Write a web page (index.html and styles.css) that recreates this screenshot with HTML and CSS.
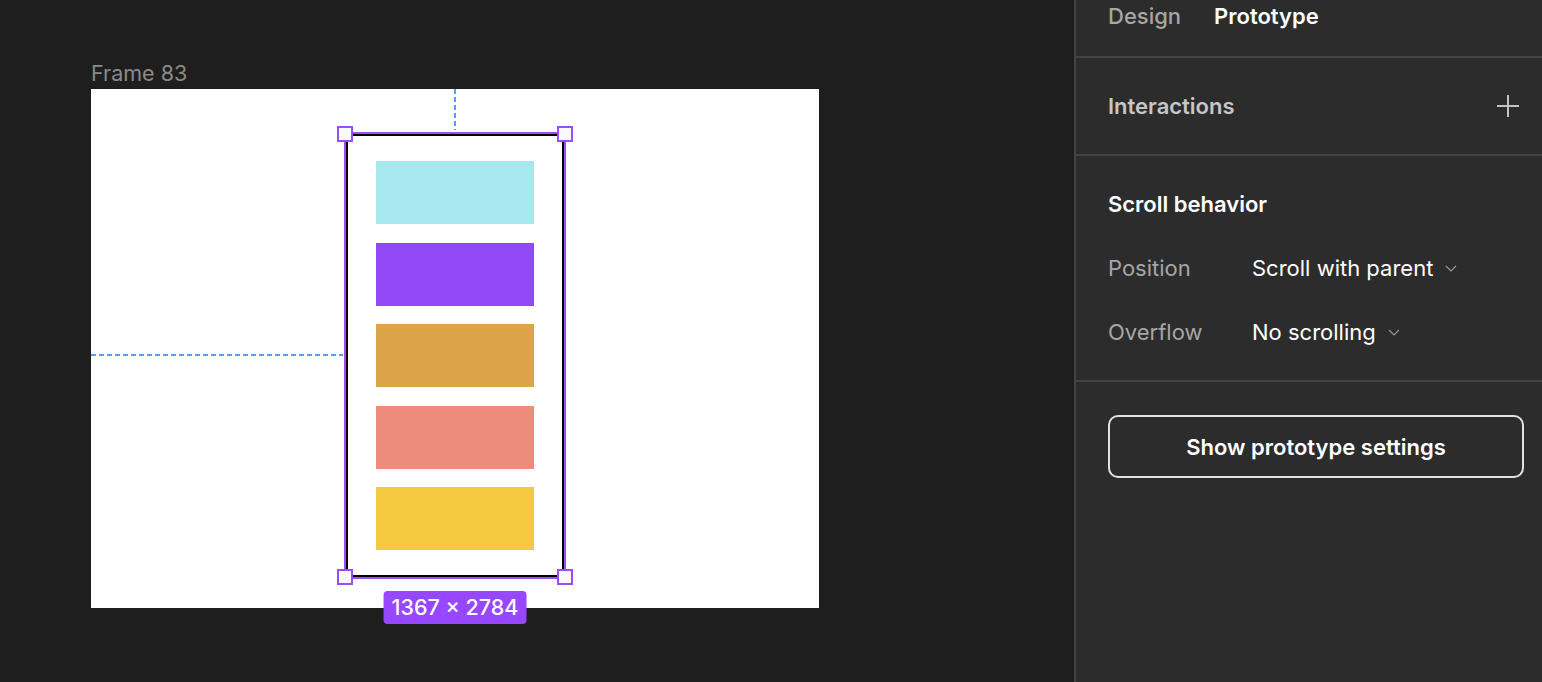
FILE: index.html
```html
<!DOCTYPE html>
<html>
<head>
<meta charset="utf-8">
<link rel="stylesheet" href="styles.css">
</head>
<body>
<div class="app">
  <main class="canvas">
    <div class="frame-label">Frame 83</div>
    <div class="frame">
      <div class="guide-v"></div>
      <div class="guide-h"></div>
      <div class="selected">
        <div class="bar cyan"></div>
        <div class="bar purple"></div>
        <div class="bar orange"></div>
        <div class="bar salmon"></div>
        <div class="bar yellow"></div>
        <span class="handle tl"></span>
        <span class="handle tr"></span>
        <span class="handle bl"></span>
        <span class="handle br"></span>
        <div class="size-badge">1367 × 2784</div>
      </div>
    </div>
  </main>
  <aside class="panel">
    <div class="tabs">
      <span class="tab">Design</span>
      <span class="tab active">Prototype</span>
    </div>
    <section class="section interactions">
      <span class="section-title muted">Interactions</span>
      <svg class="plus" width="22" height="22" viewBox="0 0 22 22"><path d="M11 0V22M0 11H22" stroke="#c4c4c4" stroke-width="2"/></svg>
    </section>
    <section class="section scroll">
      <div class="section-title">Scroll behavior</div>
      <div class="row">
        <span class="label">Position</span>
        <span class="value">Scroll with parent
          <svg class="chev" width="12" height="7" viewBox="0 0 12 7"><path d="M1 1L6 6L11 1" fill="none" stroke="#9a9a9a" stroke-width="1.2"/></svg>
        </span>
      </div>
      <div class="row">
        <span class="label">Overflow</span>
        <span class="value">No scrolling
          <svg class="chev" width="12" height="7" viewBox="0 0 12 7"><path d="M1 1L6 6L11 1" fill="none" stroke="#9a9a9a" stroke-width="1.2"/></svg>
        </span>
      </div>
    </section>
    <div class="btn-wrap">
      <button class="btn">Show prototype settings</button>
    </div>
  </aside>
</div>
</body>
</html>
```
FILE: styles.css
```css
* { box-sizing: border-box; }
html, body { margin: 0; padding: 0; }
body {
  background: #1e1e1e;
  font-family: Inter, "Noto Sans", sans-serif;
  width: 1542px;
  height: 682px;
  overflow: hidden;
}
.app {
  display: flex;
  height: 682px;
}
.canvas {
  width: 1074px;
  flex: none;
  padding: 61px 0 0 91px;
}
.frame-label {
  color: #8a8a8a;
  font-size: 21.5px;
  line-height: 24px;
  height: 28px;
}
.frame {
  position: relative;
  width: 728px;
  height: 519px;
  background: #ffffff;
  display: flex;
  justify-content: center;
  align-items: flex-start;
  padding-top: 45px;
}
.guide-v {
  position: absolute;
  left: 363px;
  top: 0;
  width: 2px;
  height: 41px;
  background: repeating-linear-gradient(to bottom, #4f9ff8 0 5px, transparent 5px 8px);
}
.guide-h {
  position: absolute;
  left: 0;
  top: 265px;
  width: 252px;
  height: 2px;
  background: repeating-linear-gradient(to right, #4f9ff8 0 5px, transparent 5px 8px);
}
.selected {
  position: relative;
  width: 218px;
  height: 443px;
  border: 2px solid #000;
  outline: 2px solid #9b4cfb;
  display: flex;
  flex-direction: column;
  align-items: center;
  padding-top: 25px;
  gap: 18.5px;
}
.bar {
  width: 158px;
  height: 63px;
  flex: none;
}
.cyan { background: #a6e8ee; }
.purple { background: #9149f8; }
.orange { background: #dba449; }
.salmon { background: #ee8c7c; }
.yellow { background: #f5c93e; }
.handle {
  position: absolute;
  width: 16px;
  height: 16px;
  background: #fafafa;
  border: 2px solid #9b4cfb;
}
.handle.tl { left: -11px; top: -10px; }
.handle.tr { right: -11px; top: -10px; }
.handle.bl { left: -11px; bottom: -10px; }
.handle.br { right: -11px; bottom: -10px; }
.size-badge {
  position: absolute;
  left: 50%;
  top: calc(100% + 16px);
  transform: translateX(-50%);
  background: #9747ff;
  color: #fff;
  font-size: 21.5px;
  font-weight: 500;
  line-height: 33px;
  height: 33px;
  padding: 0 8px;
  border-radius: 4px;
  white-space: nowrap;
}
.panel {
  flex: 1;
  background: #2c2c2c;
  border-left: 2px solid #444444;
  color: #ffffff;
  font-size: 22px;
}
.tabs {
  height: 58px;
  border-bottom: 2px solid #444444;
  display: flex;
  gap: 33px;
  padding: 4px 0 0 32px;
  line-height: 24px;
}
.tab { color: #a6a6a6; font-weight: 500; }
.tab.active { color: #fff; font-weight: 600; }
.section {
  border-bottom: 2px solid #444444;
  padding-left: 32px;
}
.interactions {
  height: 98px;
  display: flex;
  align-items: center;
  justify-content: space-between;
  padding-right: 23px;
}
.section-title {
  font-weight: 600;
  line-height: 24px;
}
.section-title.muted { color: #c6c6c6; }
.plus { display: block; }
.scroll {
  height: 226px;
  padding-top: 36px;
}
.row {
  display: flex;
  align-items: center;
  height: 64px;
}
.scroll .section-title { margin-bottom: 20px; }
.label {
  width: 144px;
  color: #a6a6a6;
}
.value {
  color: #fff;
  display: inline-flex;
  align-items: center;
  gap: 12px;
}
.chev { display: block; margin-top: 1px; }
.btn-wrap {
  padding: 33px 18px 0 32px;
}
.btn {
  width: 416px;
  height: 63px;
  background: transparent;
  border: 2px solid #e2e2e2;
  border-radius: 10px;
  color: #fff;
  font-family: Inter, "Noto Sans", sans-serif;
  font-size: 22px;
  font-weight: 600;
}
```
